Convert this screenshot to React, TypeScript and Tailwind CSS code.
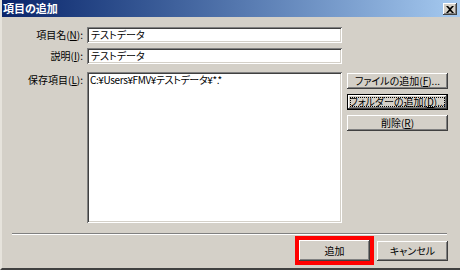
import React from "react";

const font = { fontFamily: '"Noto Sans CJK JP", "Noto Sans", sans-serif' };

const btn =
  "flex items-center justify-center whitespace-nowrap bg-[#d4d0c8] text-[10px] leading-none text-black shadow-[inset_-1px_-1px_0_#404040,inset_1px_1px_0_#ffffff,inset_-2px_-2px_0_#808080,inset_2px_2px_0_#d4d0c8]";
const sunken =
  "bg-white shadow-[inset_1px_1px_0_#808080,inset_-1px_-1px_0_#ffffff,inset_2px_2px_0_#404040,inset_-2px_-2px_0_#d4d0c8]";

function U({ c }: { c: string }) {
  return <span className="underline underline-offset-1">{c}</span>;
}

export default function App() {
  return (
    <div
      className="w-[460px] h-[270px] bg-[#d4d0c8] flex flex-col overflow-hidden border-l-2 border-l-[#e6e3dc] border-b-2 border-b-[#404040] [font-feature-settings:'palt'] text-black"
      style={font}
    >
      {/* Title bar */}
      <div className="h-[17px] flex items-center justify-between bg-gradient-to-r from-[#0a246a] to-[#a6caf0] pl-[1px] pr-[3px]">
        <span className="text-white font-bold text-[11px] leading-none">項目の追加</span>
        <div className={btn + " w-[14px] h-[12px] mt-[1px]"}>
          <svg width="8" height="7" viewBox="0 0 8 7">
            <path d="M0 0h2l2 2 2-2h2L5 3.5 8 7H6L4 5 2 7H0l3-3.5z" fill="#000" />
          </svg>
        </div>
      </div>

      {/* Body */}
      <div className="flex pt-[10px] pr-[12px]">
        <div className="flex flex-col">
          <div className="flex items-center h-[16px]">
            <div className="w-[85px] text-right pr-[4px] text-[10px] leading-none whitespace-nowrap">
              項目名(<U c="N" />):
            </div>
            <div className={sunken + " w-[255px] h-[16px] flex items-center pl-[4px] text-[10px] leading-none"}>
              テストデータ
            </div>
          </div>
          <div className="flex items-center h-[16px] mt-[5px]">
            <div className="w-[85px] text-right pr-[4px] text-[10px] leading-none whitespace-nowrap">
              説明(<U c="I" />):
            </div>
            <div className={sunken + " w-[255px] h-[16px] flex items-center pl-[4px] text-[10px] leading-none"}>
              テストデータ
            </div>
          </div>
          <div className="flex mt-[8px]">
            <div className="w-[85px] text-right pr-[4px] text-[10px] leading-none pt-[3px] whitespace-nowrap">
              保存項目(<U c="L" />):
            </div>
            <div className={sunken + " w-[255px] h-[151px] pl-[3px] pt-[3px] text-[10px] leading-none tracking-[-0.4px] whitespace-nowrap"}>
              C:¥Users¥FMV¥テストデータ¥*.*
            </div>
          </div>
        </div>

        <div className="flex flex-col ml-[5px] mt-[46px] gap-[5px]">
          <div className={btn + " w-[101px] h-[16px]"}>
            ファイルの追加(<U c="F" />)...
          </div>
          <div className="w-[101px] h-[16px] border border-black">
            <div className={btn + " w-full h-full relative"}>
              <div className="absolute inset-[2px] border border-dotted border-black" />
              フォルダーの追加(<U c="D" />)...
            </div>
          </div>
          <div className={btn + " w-[101px] h-[16px]"}>
            削除(<U c="R" />)
          </div>
        </div>
      </div>

      {/* Separator */}
      <div className="ml-[10px] mr-[13px] mt-[10px] h-[2px] border-t border-t-[#808080] border-b border-b-white" />

      {/* Bottom buttons */}
      <div className="flex justify-end items-center mt-[1px] pr-[12px] gap-[3px]">
        <div className="border-[4px] border-[#ff0000]">
          <div className={btn + " w-[71px] h-[21px]"}>追加</div>
        </div>
        <div className={btn + " w-[71px] h-[20px]"}>キャンセル</div>
      </div>
    </div>
  );
}
